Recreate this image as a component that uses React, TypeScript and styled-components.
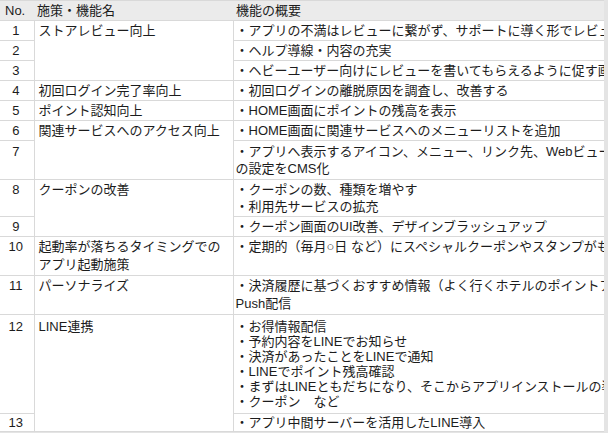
import React from 'react'
import styled, { createGlobalStyle } from 'styled-components';

type Row = {
    no: string;
    /**施策名（rowSpan がある行だけ） */
    name?: string[];
    span?: number;
    desc: string[];
    lh: number;
    pad: number;
}

const rows: Row[] = [
    { no: '1', name: ['ストアレビュー向上'], span: 3, desc: ['・アプリの不満はレビューに繋がず、サポートに導く形でレビューを増やす'], lh: 17, pad: 1 },
    { no: '2', desc: ['・ヘルプ導線・内容の充実'], lh: 17, pad: 1 },
    { no: '3', desc: ['・ヘビーユーザー向けにレビューを書いてもらえるように促す画面を表示'], lh: 17, pad: 1 },
    { no: '4', name: ['初回ログイン完了率向上'], desc: ['・初回ログインの離脱原因を調査し、改善する'], lh: 17, pad: 1 },
    { no: '5', name: ['ポイント認知向上'], desc: ['・HOME画面にポイントの残高を表示'], lh: 17, pad: 1 },
    { no: '6', name: ['関連サービスへのアクセス向上'], span: 2, desc: ['・HOME画面に関連サービスへのメニューリストを追加'], lh: 17, pad: 1 },
    { no: '7', desc: ['・アプリへ表示するアイコン、メニュー、リンク先、Webビューなど', 'の設定をCMS化'], lh: 17, pad: 2 },
    { no: '8', name: ['クーポンの改善'], span: 2, desc: ['・クーポンの数、種類を増やす', '・利用先サービスの拡充'], lh: 17, pad: 1 },
    { no: '9', desc: ['・クーポン画面のUI改善、デザインブラッシュアップ'], lh: 17, pad: 1 },
    { no: '10', name: ['起動率が落ちるタイミングでの', 'アプリ起動施策'], desc: ['・定期的（毎月○日 など）にスペシャルクーポンやスタンプがもらえる'], lh: 18, pad: 1 },
    { no: '11', name: ['パーソナライズ'], desc: ['・決済履歴に基づくおすすめ情報（よく行くホテルのポイントアップ情報など）の', 'Push配信'], lh: 18, pad: 1 },
    {
        no: '12', name: ['LINE連携'], span: 2, desc: [
            '・お得情報配信',
            '・予約内容をLINEでお知らせ',
            '・決済があったことをLINEで通知',
            '・LINEでポイント残高確認',
            '・まずはLINEともだちになり、そこからアプリインストールの導線',
            '・クーポン　など',
        ], lh: 15, pad: 4
    },
    { no: '13', desc: ['・アプリ中間サーバーを活用したLINE導入'], lh: 17, pad: 0 },
];

const App: React.FC = () => {
    return (
        <>
            <GlobalStyle />
            <Sheet>
                <colgroup>
                    <col style={{ width: 34 }} />
                    <col style={{ width: 199 }} />
                    <col />
                </colgroup>
                <thead>
                    <tr>
                        <HeadCell>No.</HeadCell>
                        <HeadCell>施策・機能名</HeadCell>
                        <HeadCell>機能の概要</HeadCell>
                    </tr>
                </thead>
                <tbody>
                    {rows.map((r) => (
                        <BodyRow key={r.no} $lh={r.lh} $pad={r.pad}>
                            <NoCell>{r.no}</NoCell>
                            {r.name &&
                                <NameCell rowSpan={r.span}>
                                    {r.name.map((n) => <Line key={n}>{n}</Line>)}
                                </NameCell>
                            }
                            <DescCell>
                                {r.desc.map((d) => <Line key={d}>{d}</Line>)}
                            </DescCell>
                        </BodyRow>
                    ))}
                </tbody>
            </Sheet>
        </>
    )
}

const GlobalStyle = createGlobalStyle`
    body {
        margin: 0;
        background: #e4e4e4;
        font-family: "Liberation Sans", "Noto Sans CJK JP", sans-serif;
        font-size: 13px;
        color: #1c1c1c;
    }
`
const Sheet = styled.table`
    width: 604px;
    table-layout: fixed;
    border-collapse: collapse;
    background: #ffffff;
    border-top: 1px solid #d9d9d9;
`
const HeadCell = styled.th`
    background: #ebebeb;
    font-weight: normal;
    text-align: left;
    height: 19px;
    line-height: 19px;
    padding: 0 3px;
    border-bottom: 1px solid #d9d9d9;
    &:first-child {
        padding-left: 5px;
    }
`
const BodyRow = styled.tr<{ $lh: number; $pad: number }>`
    line-height: ${(p) => p.$lh}px;
    & > td {
        padding-top: ${(p) => p.$pad}px;
        padding-bottom: ${(p) => p.$pad}px;
    }
`
const NoCell = styled.td`
    text-align: center;
    vertical-align: top;
    padding-left: 0;
    padding-right: 2px;
    border-bottom: 1px solid #d9d9d9;
    border-right: 1px solid #d9d9d9;
`
const NameCell = styled.td`
    vertical-align: top;
    padding-left: 4px;
    padding-right: 3px;
    white-space: nowrap;
    border-bottom: 1px solid #d9d9d9;
    border-right: 1px solid #d9d9d9;
`
const DescCell = styled.td`
    vertical-align: top;
    padding-left: 2px;
    padding-right: 0;
    white-space: nowrap;
    overflow: hidden;
    border-bottom: 1px solid #d9d9d9;
`
const Line = styled.div`
    white-space: nowrap;
`

export default App;
